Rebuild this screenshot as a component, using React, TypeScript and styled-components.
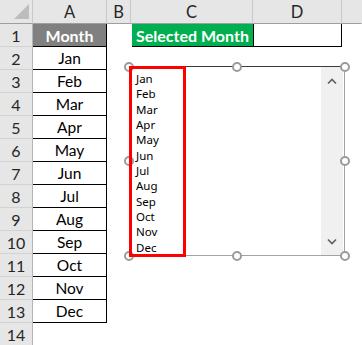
import React from "react";
import styled, { createGlobalStyle, css } from "styled-components";

const GlobalStyle = createGlobalStyle`
  html, body { margin: 0; padding: 0; background: #ffffff; }
  * { box-sizing: border-box; }
`;

const MONTHS = ["Jan", "Feb", "Mar", "Apr", "May", "Jun", "Jul", "Aug", "Sep", "Oct", "Nov", "Dec"];
const COLS = ["A", "B", "C", "D", ""];

const Sheet = styled.div`
  position: relative;
  width: 362px;
  height: 345px;
  overflow: hidden;
  display: grid;
  grid-template-columns: 33px 74px 24px 122px 89px 20px;
  grid-template-rows: 24px repeat(14, 23px);
  font-family: Lato, "Liberation Sans", sans-serif;
  color: #000;
`;

const HeaderBase = css`
  background: #e6e6e6;
  color: #262626;
  font-size: 16px;
  display: flex;
  align-items: center;
  justify-content: center;
`;

const Corner = styled.div`
  ${HeaderBase};
  position: relative;
  border-right: 1px solid #c9c9c9;
  border-bottom: 1px solid #9e9e9e;
  &::after {
    content: "";
    position: absolute;
    right: 3px;
    bottom: 4px;
    width: 15px;
    height: 15px;
    background: #bdbdbd;
    clip-path: polygon(100% 0, 100% 100%, 0 100%);
  }
`;

const ColHeader = styled.div<{ $last?: boolean }>`
  ${HeaderBase};
  font-size: 16.5px;
  border-right: 1px solid ${(p) => (p.$last ? "transparent" : "#c9c9c9")};
  border-bottom: 1px solid #9e9e9e;
  padding-top: 1px;
`;

const RowHeader = styled.div`
  ${HeaderBase};
  border-right: 1px solid #b4b4b4;
  border-bottom: 1px solid #d2d2d2;
`;

type Variant = "month" | "title" | "selected" | "output" | "empty";

const Cell = styled.div<{ $variant: Variant }>`
  display: flex;
  align-items: center;
  justify-content: center;
  font-size: 15.5px;
  background: #fff;
  ${(p) =>
    p.$variant === "month" &&
    css`
      border-right: 1px solid #000;
      border-bottom: 1px solid #000;
    `}
  ${(p) =>
    p.$variant === "title" &&
    css`
      background: #808080;
      color: #fff;
      font-weight: 700;
      font-size: 16px;
      border-right: 1px solid #000;
      border-bottom: 1px solid #000;
    `}
  ${(p) =>
    p.$variant === "selected" &&
    css`
      background: #00b050;
      color: #fff;
      font-weight: 700;
      font-size: 16px;
      margin-left: 1px;
      border-bottom: 1px solid #000;
    `}
  ${(p) =>
    p.$variant === "output" &&
    css`
      border-left: 1px solid #000;
      border-right: 1px solid #000;
      border-bottom: 1px solid #000;
    `}
`;

const ListBox = styled.div`
  position: absolute;
  left: 129px;
  top: 66px;
  width: 216px;
  height: 190px;
  display: flex;
  background: #fff;
  border: 1px solid #a3a3a3;
  border-top-color: #3c3c3c;
  border-left: none;
`;

const RedFrame = styled.div`
  position: relative;
  z-index: 2;
  width: 57px;
  margin: -1px 0 -2px 0;
  border: 3px solid #ff0000;
  padding: 2px 0 0 4px;
  display: flex;
  flex-direction: column;
  font-family: "Noto Sans", "Open Sans", sans-serif;
  font-size: 11.5px;
  color: #000;
`;

const Item = styled.div`
  height: 15.35px;
  line-height: 15.35px;
  white-space: nowrap;
`;

const Spacer = styled.div`
  flex: 1;
`;

const ScrollBar = styled.div`
  width: 22px;
  margin-right: 1px;
  background: #f0f0f0;
  display: flex;
  flex-direction: column;
  justify-content: space-between;
  align-items: center;
  padding: 11px 0 10px;
`;

const Chevron = styled.svg`
  display: block;
  width: 10px;
  height: 7px;
`;

const Handle = styled.div<{ $x: string; $y: string }>`
  position: absolute;
  z-index: 1;
  left: ${(p) => p.$x};
  top: ${(p) => p.$y};
  width: 10px;
  height: 10px;
  margin: -5px 0 0 -5px;
  border-radius: 50%;
  border: 2px solid #9b9b9b;
  background: #fff;
`;

const HANDLES: Array<[string, string]> = [
  ["0px", "0px"],
  ["108px", "0px"],
  ["216px", "0px"],
  ["0px", "94px"],
  ["216px", "94px"],
  ["0px", "189px"],
  ["108px", "189px"],
  ["216px", "189px"],
];

function cellFor(row: number, col: number) {
  if (col === 0) {
    if (row === 1) return <Cell key={col} $variant="title">Month</Cell>;
    if (row <= 13) return <Cell key={col} $variant="month">{MONTHS[row - 2]}</Cell>;
    return <Cell key={col} $variant="empty" />;
  }
  if (row === 1 && col === 2) return <Cell key={col} $variant="selected">Selected Month</Cell>;
  if (row === 1 && col === 3) return <Cell key={col} $variant="output" />;
  return <Cell key={col} $variant="empty" />;
}

const SheetRow = styled.div`
  display: contents;
`;

export default function App() {
  const rows = Array.from({ length: 14 }, (_, i) => i + 1);
  return (
    <>
      <GlobalStyle />
      <Sheet>
        <Corner />
        {COLS.map((c, i) => (
          <ColHeader key={i} $last={i === COLS.length - 1}>
            {c}
          </ColHeader>
        ))}
        {rows.map((r) => (
          <SheetRow key={r}>
            <RowHeader>{r}</RowHeader>
            {COLS.map((_, ci) => cellFor(r, ci))}
          </SheetRow>
        ))}
        <ListBox>
          {HANDLES.map(([x, y], i) => (
            <Handle key={i} $x={x} $y={y} />
          ))}
          <RedFrame>
            {MONTHS.map((m) => (
              <Item key={m}>{m}</Item>
            ))}
          </RedFrame>
          <Spacer />
          <ScrollBar>
            <Chevron viewBox="0 0 10 7">
              <path d="M1 5.5 L5 1.5 L9 5.5" fill="none" stroke="#5f5f5f" strokeWidth="1.6" />
            </Chevron>
            <Chevron viewBox="0 0 10 7">
              <path d="M1 1.5 L5 5.5 L9 1.5" fill="none" stroke="#5f5f5f" strokeWidth="1.6" />
            </Chevron>
          </ScrollBar>
        </ListBox>
      </Sheet>
    </>
  );
}
